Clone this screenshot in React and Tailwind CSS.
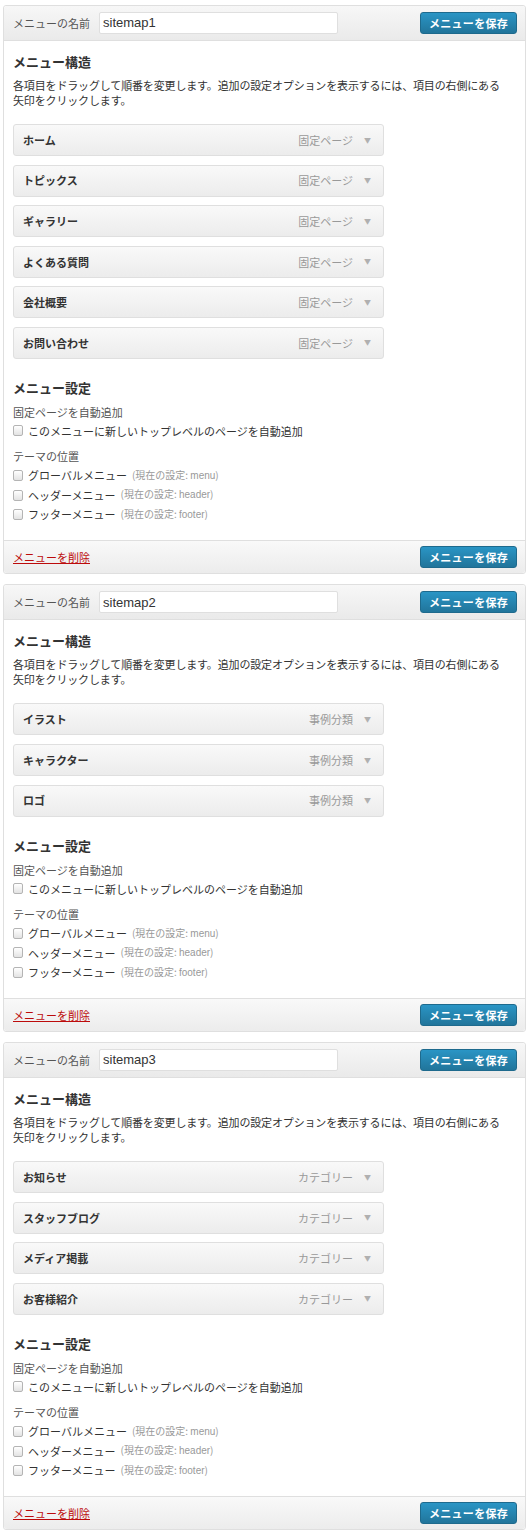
import React from "react";

const menus = [
  {
    name: "sitemap1",
    items: [
      ["ホーム", "固定ページ"],
      ["トピックス", "固定ページ"],
      ["ギャラリー", "固定ページ"],
      ["よくある質問", "固定ページ"],
      ["会社概要", "固定ページ"],
      ["お問い合わせ", "固定ページ"],
    ],
  },
  {
    name: "sitemap2",
    items: [
      ["イラスト", "事例分類"],
      ["キャラクター", "事例分類"],
      ["ロゴ", "事例分類"],
    ],
  },
  {
    name: "sitemap3",
    items: [
      ["お知らせ", "カテゴリー"],
      ["スタッフブログ", "カテゴリー"],
      ["メディア掲載", "カテゴリー"],
      ["お客様紹介", "カテゴリー"],
    ],
  },
];

const locations = [
  ["グローバルメニュー", "menu"],
  ["ヘッダーメニュー", "header"],
  ["フッターメニュー", "footer"],
];

const SaveButton = () => (
  <button className="w-[97px] h-[22px] rounded-[3px] border border-[#1e6a8d] bg-gradient-to-b from-[#2a95c5] to-[#21759b] text-white text-[11px] font-bold leading-none tracking-[0.3px]">
    メニューを保存
  </button>
);

const Checkbox = () => (
  <span className="inline-block w-[10px] h-[11px] rounded-[2px] border border-[#b4b4b4] bg-gradient-to-b from-white to-[#e3e3e3] shrink-0" />
);

const MenuPanel = ({ menu }) => (
  <div className="ml-[3px] mr-[4px] mb-[10px] border border-[#dfdfdf] rounded-[3px] bg-white">
    {/* Header */}
    <div className="h-[35px] flex items-center justify-between pl-[9px] pr-[8px] border-b border-[#dfdfdf] bg-gradient-to-b from-[#f7f7f7] to-[#eaeaea] rounded-t-[3px]">
      <div className="flex items-center">
        <span className="text-[11px] text-[#555] w-[86px]">メニューの名前</span>
        <div className="w-[239px] h-[22px] bg-white border border-[#dfdfdf] rounded-[2px] flex items-center px-[3px] text-[13px] text-[#333] font-['Liberation_Sans',sans-serif]">
          {menu.name}
        </div>
      </div>
      <SaveButton />
    </div>

    {/* Body */}
    <div className="pl-[9px] pr-[9px] pt-[11px] pb-[16px]">
      <h3 className="text-[13px] font-bold leading-[20px] text-[#333]">メニュー構造</h3>
      <p className="mt-[6px] text-[11px] leading-[14.5px] tracking-[-0.15px] text-[#333]">
        各項目をドラッグして順番を変更します。追加の設定オプションを表示するには、項目の右側にある
        <br />
        矢印をクリックします。
      </p>

      <div className="mt-[17px] flex flex-col gap-[8.6px]">
        {menu.items.map(([title, type]) => (
          <div
            key={title}
            className="w-[371px] h-[32px] flex items-center justify-between pl-[9px] pr-[12px] border border-[#dfdfdf] rounded-[3px] bg-gradient-to-b from-[#f9f9f9] to-[#ececec]"
          >
            <span className="text-[11px] font-bold text-[#333]">{title}</span>
            <span className="flex items-center gap-[11px] text-[11px] text-[#999]">
              {type}
              <span className="text-[7px] text-[#b0b0b0] leading-none">▼</span>
            </span>
          </div>
        ))}
      </div>

      <h3 className="mt-[19px] text-[13px] font-bold leading-[20px] text-[#333]">メニュー設定</h3>
      <div className="mt-[5px] text-[11px] leading-[18px] text-[#555]">固定ページを自動追加</div>
      <label className="mt-[1px] flex items-center gap-[5px] text-[11px] leading-[18px] text-[#333]">
        <Checkbox />
        このメニューに新しいトップレベルのページを自動追加
      </label>
      <div className="mt-[7px] text-[11px] leading-[18px] text-[#555]">テーマの位置</div>
      <div className="mt-[1px] flex flex-col">
        {locations.map(([label, slug]) => (
          <label key={slug} className="flex items-center gap-[5px] text-[11px] leading-[18.5px] text-[#333]">
            <Checkbox />
            {label}
            <span className="text-[10px] text-[#999]">
              (現在の設定: <span className="font-['Liberation_Sans',sans-serif]">{slug}</span>)
            </span>
          </label>
        ))}
      </div>
    </div>

    {/* Footer */}
    <div className="h-[33px] flex items-center justify-between pl-[9px] pr-[8px] border-t border-[#dfdfdf] bg-gradient-to-b from-[#f9f9f9] to-[#ececec] rounded-b-[3px]">
      <a href="#" className="text-[11px] text-[#bc0b0b] underline">メニューを削除</a>
      <SaveButton />
    </div>
  </div>
);

export default function App() {
  return (
    <div className="w-[530px] bg-white pt-[5px] pb-[1px] font-['Noto_Sans_CJK_JP','Noto_Sans',sans-serif]">
      {menus.map((m) => (
        <MenuPanel key={m.name} menu={m} />
      ))}
    </div>
  );
}
